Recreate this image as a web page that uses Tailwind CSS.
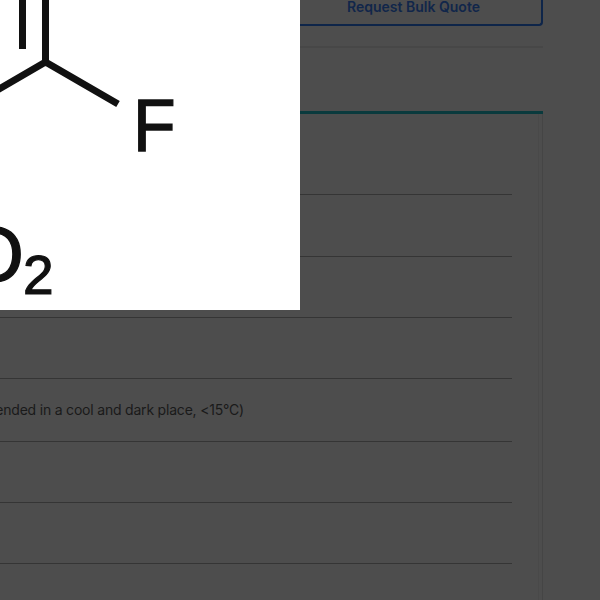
<!DOCTYPE html>
<html>
<head>
<meta charset="utf-8">
<script src="https://cdn.jsdelivr.net/npm/@tailwindcss/browser@4"></script>
</head>
<body class="bg-[#4d4d4d]">
<div class="relative w-[600px] h-[600px] overflow-hidden bg-[#4d4d4d] font-['Inter',sans-serif]">
  <div class="flex flex-col w-[543px]">
    <div class="ml-[280px] h-[26px] border-b-2 border-r-2 border-[#0e2549] rounded-br-[4px] flex justify-center items-start pl-[6px]">
      <span class="text-[14px] leading-[13px] font-semibold text-[#11264a]">Request Bulk Quote</span>
    </div>
    <div class="mt-[20px] h-[2px] bg-[#474747]"></div>
    <div class="h-[63px]"></div>
    <div class="h-[3px] bg-[#0a3a3d]"></div>
    <div class="border-r border-[#454545] h-[490px] pr-[3px]">
      <div class="border-r border-[#494949] h-full pr-[26px] flex flex-col">
        <div class="h-[81px] border-b border-[#353535]"></div>
        <div class="h-[62px] border-b border-[#353535]"></div>
        <div class="h-[61px] border-b border-[#353535]"></div>
        <div class="h-[61px] border-b border-[#353535]"></div>
        <div class="h-[63px] border-b border-[#353535] flex items-start pt-[21px]">
          <div class="w-[244px] flex justify-end whitespace-nowrap text-[14px] leading-[20px] tracking-[-0.2px] text-[#1a1a1a]">Room Temperature (Recommended in a cool and dark place, &lt;15°C)</div>
        </div>
        <div class="h-[61px] border-b border-[#353535]"></div>
        <div class="h-[61px] border-b border-[#353535]"></div>
      </div>
    </div>
  </div>
  <svg class="absolute left-0 top-0" width="300" height="310" viewBox="0 0 300 310" xmlns="http://www.w3.org/2000/svg">
    <rect width="300" height="310" fill="#fff"/>
    <g stroke="#111" stroke-width="7" fill="none">
      <path d="M22.5 0V49"/>
      <path d="M45.5 0V62"/>
      <path d="M-6 92L45.5 62L118 104" stroke-linejoin="miter"/>
    </g>
    <g fill="#111" stroke="#111" font-family="'Liberation Sans',sans-serif">
      <text transform="translate(133 151) scale(.93 1)" font-size="75" stroke-width="1.4">F</text>
      <text x="-36" y="281" font-size="77" stroke-width="1.4">O</text>
      <text x="23" y="293.5" font-size="55" stroke-width="1.2">2</text>
    </g>
  </svg>
</div>
</body>
</html>
